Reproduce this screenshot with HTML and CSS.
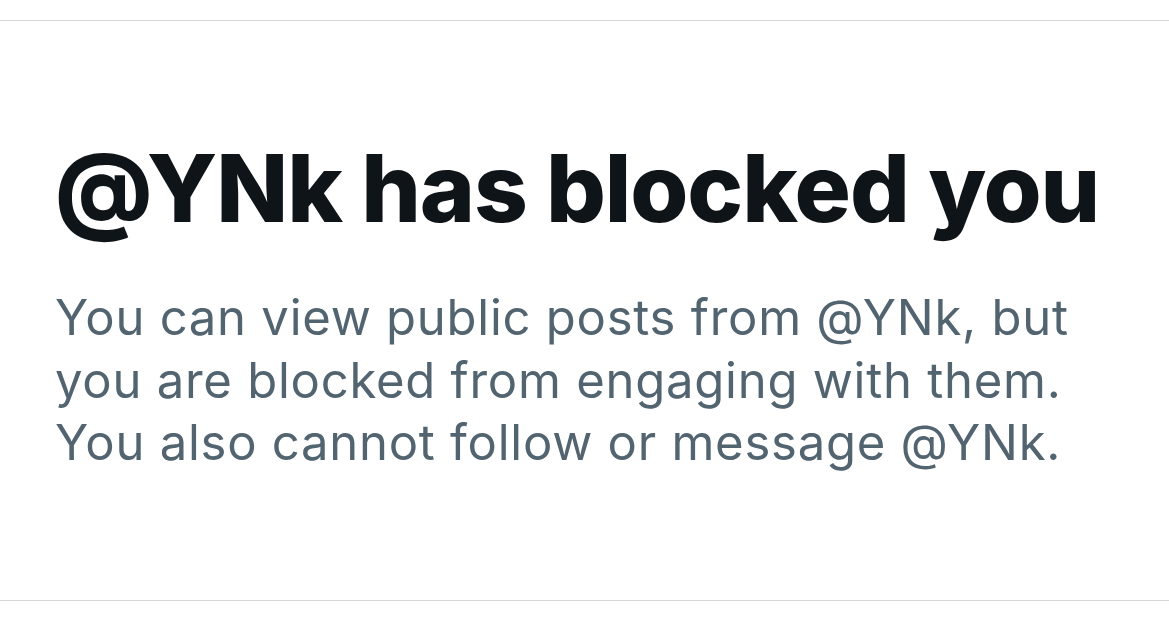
FILE: index.html
```html
<!DOCTYPE html>
<html lang="en">
<head>
<meta charset="utf-8">
<link rel="stylesheet" href="styles.css">
<title>Blocked</title>
</head>
<body>
<div class="page">
  <section class="panel">
    <h1 class="title">@YNk has blocked you</h1>
    <p class="desc">You can view public posts from @YNk, but<br>you are blocked from engaging with them.<br>You also cannot follow or message @YNk.</p>
  </section>
</div>
</body>
</html>
```

FILE: styles.css
```css
html, body {
  margin: 0;
  padding: 0;
  background: #ffffff;
}
.page {
  padding-top: 20px;
}
.panel {
  border-top: 1px solid #d6d6d6;
  border-bottom: 1px solid #d6d6d6;
  height: 581px;
  box-sizing: border-box;
  padding: 112px 40px 0 55px;
}
.title {
  margin: 0;
  font-family: Inter, "Liberation Sans", sans-serif;
  font-weight: 800;
  font-size: 94px;
  line-height: 110px;
  letter-spacing: -1.15px;
  color: #0f1419;
  white-space: nowrap;
}
.desc {
  margin: 44px 0 0;
  font-family: Inter, "Liberation Sans", sans-serif;
  font-weight: 400;
  font-size: 49px;
  line-height: 62.5px;
  letter-spacing: 0.75px;
  color: #536471;
  white-space: nowrap;
}
```
